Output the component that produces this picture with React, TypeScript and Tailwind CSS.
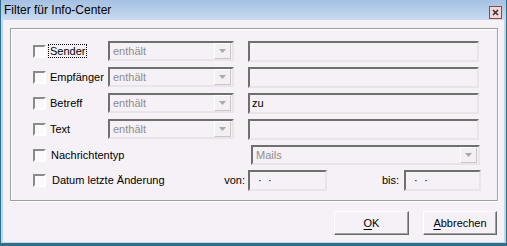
import React from "react";

const FONT = { fontFamily: '"Liberation Sans", Arial, sans-serif' };

const sunken =
  "border-2 border-t-[#6f6f6f] border-l-[#6f6f6f] border-b-[#e8e4e8] border-r-[#e8e4e8] bg-[#f6f1f6]";

function CheckBox() {
  return (
    <span className="block w-[13px] h-[13px] shrink-0 border-2 border-t-[#8a8a8a] border-l-[#8a8a8a] border-b-white border-r-white bg-[#fbf9fb]" />
  );
}

function DropButton() {
  return (
    <span className="flex items-center justify-center w-[17px] h-[16px] shrink-0 bg-[#f3eff3] border border-t-white border-l-white border-b-[#c9c5c9] border-r-[#c9c5c9]">
      <svg width="7" height="4" viewBox="0 0 7 4">
        <path d="M0 0h7L3.5 4z" fill="#a9a9a9" />
      </svg>
    </span>
  );
}

function Combo({ value, className }: { value: string; className: string }) {
  return (
    <div className={`${sunken} ${className} h-[20px] flex items-center justify-between pl-[3px] pr-[1px]`}>
      <span className="text-[11px] text-[#8d8d8d] leading-none">{value}</span>
      <DropButton />
    </div>
  );
}

function Field({ value = "", className }: { value?: string; className: string }) {
  return (
    <div className={`${sunken} ${className} h-[21px] flex items-center pl-[2px]`}>
      <span className="text-[11px] text-black leading-none">{value}</span>
    </div>
  );
}

const ROWS = [
  { label: "Sender", value: "", focus: true },
  { label: "Empfänger", value: "" },
  { label: "Betreff", value: "zu" },
  { label: "Text", value: "" },
];

export default function App() {
  return (
    <div
      className="w-[507px] h-[246px] flex flex-col bg-[#f6f1f6] border-l border-r border-b-[3px] border-[#2f6f8a] overflow-hidden"
      style={FONT}
    >
      {/* title bar */}
      <div className="h-[20px] shrink-0 flex items-center justify-between pl-[3px] pr-[4px] bg-gradient-to-b from-[#a4c0e2] to-[#c9dbef]">
        <span className="text-[12px] text-black">Filter für Info-Center</span>
        <span className="flex items-center justify-center w-[13px] h-[13px] mt-[4px] border border-[#8b4a4a] bg-[#f1d8d8]">
          <svg width="7" height="7" viewBox="0 0 7 7">
            <path d="M1 1l5 5M6 1l-5 5" stroke="#333" strokeWidth="1.6" />
          </svg>
        </span>
      </div>

      {/* body */}
      <div className="flex-1 flex flex-col border-l-[2px] border-r-[2px] border-b border-[#c2d6ec] pl-[7px] pr-[6px] pt-[8px]">
        <div className="h-[173px] border border-[#a0a0a0] shadow-[inset_1px_1px_0_#ffffff,1px_1px_0_#ffffff] pl-[22px] pr-[16px] pt-[12px] flex flex-col text-[11px] text-black">
          {ROWS.map((r) => (
            <div key={r.label} className="h-[20px] mb-[6px] flex items-center">
              <CheckBox />
              <div className="w-[62px] pl-[3px]">
                <span
                  className={`px-[1px] ${r.focus ? "outline outline-1 outline-dotted outline-black" : ""}`}
                >
                  {r.label}
                </span>
              </div>
              <Combo value="enthält" className="w-[126px]" />
              <Field value={r.value} className="ml-[14px] w-[231px]" />
            </div>
          ))}

          <div className="h-[20px] mb-[5px] flex items-center">
            <CheckBox />
            <span className="pl-[5px]">Nachrichtentyp</span>
            <Combo value="Mails" className="ml-auto w-[229px] mr-[1px]" />
          </div>

          <div className="h-[21px] flex items-center">
            <CheckBox />
            <div className="w-[202px] flex items-center justify-between pl-[6px] pr-[3px]">
              <span>Datum letzte Änderung</span>
              <span>von:</span>
            </div>
            <Field value="  ·  ·" className="w-[79px] whitespace-pre" />
            <span className="ml-auto mr-[5px]">bis:</span>
            <Field value="  ·  ·" className="w-[77px] whitespace-pre" />
          </div>
        </div>

        <div className="flex justify-end gap-[14px] pt-[10px] pr-[1px] text-[11px] text-black">
          <button className="w-[75px] h-[24px] bg-[#f6f1f6] border border-t-white border-l-white border-b-[#696969] border-r-[#696969] shadow-[inset_-1px_-1px_0_#a0a0a0]">
            <span className="underline underline-offset-2">O</span>K
          </button>
          <button className="w-[74px] h-[24px] bg-[#f6f1f6] border border-t-white border-l-white border-b-[#696969] border-r-[#696969] shadow-[inset_-1px_-1px_0_#a0a0a0]">
            <span className="underline underline-offset-2">A</span>bbrechen
          </button>
        </div>
      </div>
    </div>
  );
}
